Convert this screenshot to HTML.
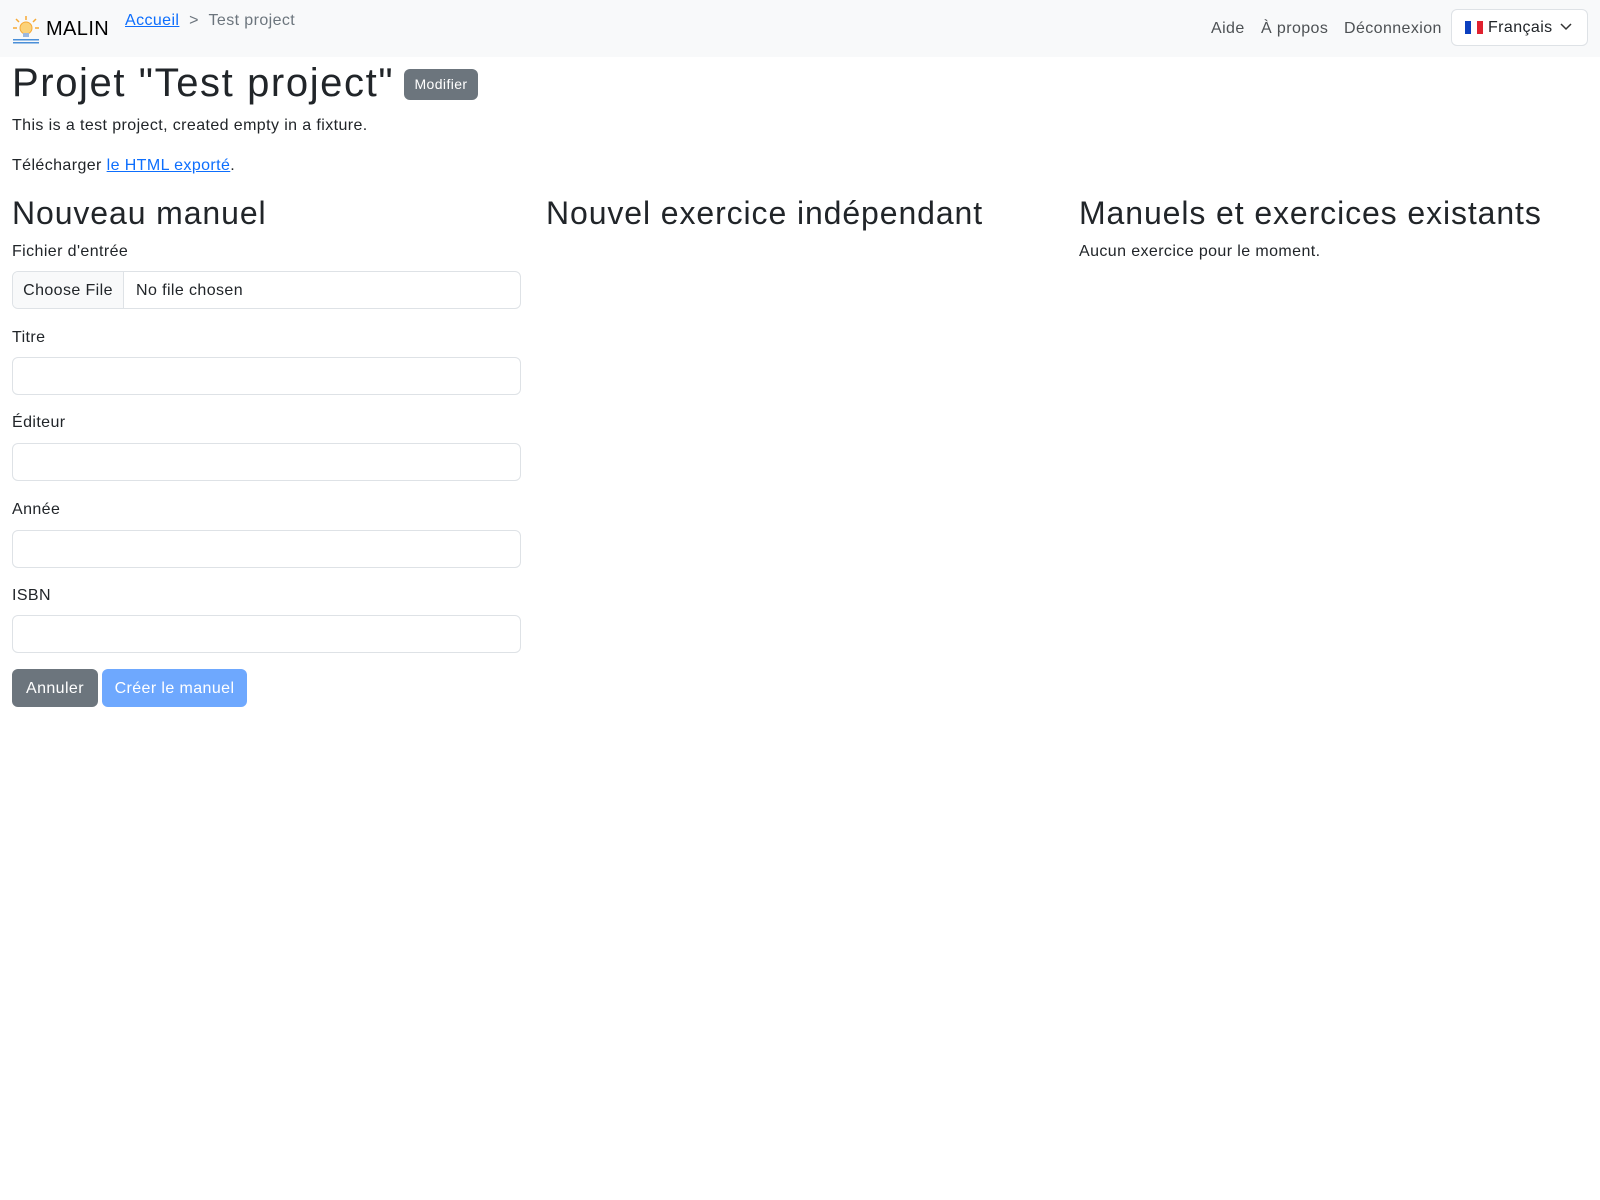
<!DOCTYPE html>
<html><head><meta charset="utf-8"><style>
*{box-sizing:border-box;margin:0;padding:0}
body{width:1600px;height:1200px;background:#fff;font-family:"Liberation Sans",sans-serif;color:#212529;font-size:16px;position:relative;overflow:hidden;letter-spacing:0.4px}
.a{position:absolute;white-space:nowrap}
.nav{position:absolute;left:0;top:0;width:1600px;height:57px;background:#f8f9fa}
.t{height:24px;line-height:24px}
h1{font-weight:500;font-size:40px;line-height:48px;letter-spacing:1.6px}
h2{font-weight:500;font-size:32px;line-height:40px;letter-spacing:0.9px}
.inp{position:absolute;left:12px;width:509px;height:38px;border:1px solid #dee2e6;border-radius:6px;background:#fff}
a{color:#0d6efd;text-decoration:underline}
.btn{position:absolute;border-radius:6px;color:#fff;text-align:center}
</style></head><body>
<div class="nav"></div>
<svg class="a" style="left:12px;top:15px" width="28" height="29" viewBox="0 0 28 29">
<g stroke="#f7a934" stroke-width="1.5"><line x1="14" y1="1" x2="14" y2="5"/><line x1="4" y1="4" x2="7" y2="7"/><line x1="24" y1="4" x2="21" y2="7"/><line x1="1" y1="13" x2="5" y2="13"/><line x1="23" y1="13" x2="27" y2="13"/></g>
<circle cx="14" cy="13" r="6" fill="#fbd27a" stroke="#f7a934"/><rect x="11" y="18" width="6" height="4" fill="#9bb8e0"/>
<rect x="1" y="24" width="26" height="1.5" fill="#4a8fd8"/><rect x="1" y="27" width="26" height="1.5" fill="#4a8fd8"/></svg>
<div class="a" style="left:46px;top:15px;font-size:20px;line-height:28px;color:#000">MALIN</div>
<div class="a t" style="left:125px;top:9px"><a href="#">Accueil</a><span style="color:#6c757d">&nbsp;&nbsp;&gt;&nbsp;&nbsp;Test project</span></div>
<div class="a t" style="left:1211px;top:17px;color:#4d5154">Aide</div>
<div class="a t" style="left:1261px;top:17px;color:#4d5154">À propos</div>
<div class="a t" style="left:1344px;top:17px;color:#4d5154">Déconnexion</div>
<div class="a" style="left:1451px;top:9px;width:137px;height:37px;border:1px solid #dee2e6;border-radius:6px;background:#fff"></div>
<div class="a" style="left:1465px;top:21px;width:18px;height:13px;display:flex"><span style="flex:1;background:#0b3fbf"></span><span style="flex:1;background:#fff"></span><span style="flex:1;background:#e0212f"></span></div>
<div class="a t" style="left:1488px;top:16px">Français</div>
<svg class="a" style="left:1560px;top:22px" width="12" height="10"><path d="M1 2l5 5 5-5" fill="none" stroke="#333" stroke-width="1.5"/></svg>
<h1 class="a" style="left:12px;top:59px">Projet "Test project"</h1>
<div class="btn" style="left:404px;top:69px;width:74px;height:31px;background:#6c757d;font-size:14px;line-height:31px">Modifier</div>
<div class="a t" style="left:12px;top:114px">This is a test project, created empty in a fixture.</div>
<div class="a t" style="left:12px;top:154px">Télécharger <a href="#">le HTML exporté</a>.</div>
<h2 class="a" style="left:12px;top:193px">Nouveau manuel</h2>
<h2 class="a" style="left:546px;top:193px">Nouvel exercice indépendant</h2>
<h2 class="a" style="left:1079px;top:193px">Manuels et exercices existants</h2>
<div class="a t" style="left:1079px;top:240px">Aucun exercice pour le moment.</div>
<div class="a t" style="left:12px;top:240px">Fichier d'entrée</div>
<div class="inp" style="top:271px;overflow:hidden"><div style="position:absolute;left:0;top:0;width:111px;height:36px;background:#f8f9fa;border-right:1px solid #dee2e6;line-height:37px;text-align:center">Choose File</div><div style="position:absolute;left:123px;top:0;line-height:37px">No file chosen</div></div>
<div class="a t" style="left:12px;top:326px">Titre</div><div class="inp" style="top:357px"></div>
<div class="a t" style="left:12px;top:411px">Éditeur</div><div class="inp" style="top:443px"></div>
<div class="a t" style="left:12px;top:498px">Année</div><div class="inp" style="top:530px"></div>
<div class="a t" style="left:12px;top:584px">ISBN</div><div class="inp" style="top:615px"></div>
<div class="btn" style="left:12px;top:669px;width:86px;height:38px;line-height:39px;background:#6c757d">Annuler</div>
<div class="btn" style="left:102px;top:669px;width:145px;height:38px;line-height:39px;background:#6ea8fe">Créer le manuel</div>
</body></html>
